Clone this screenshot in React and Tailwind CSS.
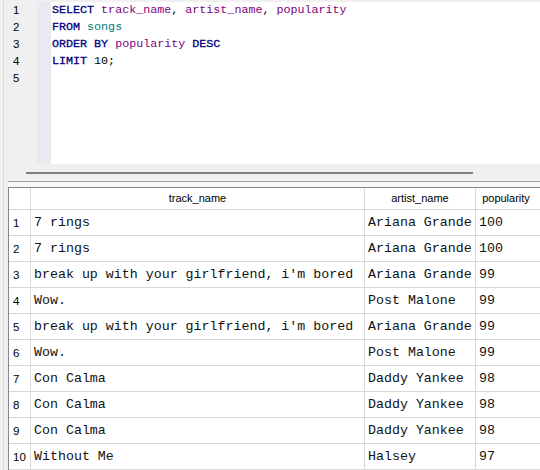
const code = [
  [['SELECT', 'kw'], [' '], ['track_name', 'id'], [', '], ['artist_name', 'id'], [', '], ['popularity', 'id']],
  [['FROM', 'kw'], [' '], ['songs', 'tb']],
  [['ORDER BY', 'kw'], [' '], ['popularity', 'id'], [' '], ['DESC', 'kw']],
  [['LIMIT', 'kw'], [' 10;']],
  [],
];

const rows = [
  ['7 rings', 'Ariana Grande', '100'],
  ['7 rings', 'Ariana Grande', '100'],
  ["break up with your girlfriend, i'm bored", 'Ariana Grande', '99'],
  ['Wow.', 'Post Malone', '99'],
  ["break up with your girlfriend, i'm bored", 'Ariana Grande', '99'],
  ['Wow.', 'Post Malone', '99'],
  ['Con Calma', 'Daddy Yankee', '98'],
  ['Con Calma', 'Daddy Yankee', '98'],
  ['Con Calma', 'Daddy Yankee', '98'],
  ['Without Me', 'Halsey', '97'],
];

const tokenClass = {
  kw: 'text-[#000080] [-webkit-text-stroke:0.3px_#000080]',
  id: 'text-[#800080]',
  tb: 'text-[#008080]',
};

const mono = "font-['Liberation_Mono','Courier_New',monospace]";
const sans = "font-['Liberation_Sans',Arial,sans-serif]";

export default function App() {
  return (
    <div className="w-[540px] h-[470px] bg-[#f0f0f0] flex overflow-hidden">
      {/* левая полоска */}
      <div className="w-[8px] shrink-0 pl-[3px]">
        <div className="w-[1px] h-full bg-[#dadada]" />
      </div>

      <div className="flex-1 flex flex-col">
        {/* редактор */}
        <div className="mt-[2px] h-[162px] flex">
          <div className={`w-[29px] bg-[#f0f0f0] pl-[5px] text-[11.5px] text-black ${sans}`}>
            {code.map((_, i) => (
              <div key={i} className="h-[17px] leading-[17px]">{i + 1}</div>
            ))}
          </div>
          <div className="w-[14px] bg-[#e9e9f2]" />
          <div className={`flex-1 bg-white pl-[1px] text-[11.7px] ${mono}`}>
            {code.map((line, i) => (
              <div key={i} className="h-[17px] leading-[17px] whitespace-pre">
                {line.map(([t, k], j) => (
                  <span key={j} className={k ? tokenClass[k] : 'text-black'}>{t}</span>
                ))}
              </div>
            ))}
          </div>
        </div>

        {/* разделитель */}
        <div className="h-[17px] pt-[8px] pl-[18px]">
          <div className="w-[447px] h-[2px] bg-[#808080]" />
        </div>
        <div className="h-[1px] bg-[#a0a0a0]" />
        <div className="h-[5px] bg-[#f7f7f7]" />

        {/* таблица результатов */}
        <div className="flex-1 bg-white border-t border-l border-[#828790]">
          <div className={`flex h-[22px] border-b border-[#d9d9d9] text-[11px] text-black ${sans}`}>
            <div className="w-[22px] border-r border-[#d9d9d9]" />
            <div className="w-[334px] border-r border-[#d9d9d9] flex items-center justify-center">track_name</div>
            <div className="w-[111px] border-r border-[#d9d9d9] flex items-center justify-center">artist_name</div>
            <div className="flex-1 flex items-center justify-center pr-[4px]">popularity</div>
          </div>
          {rows.map((r, i) => (
            <div key={i} className="flex h-[26px] border-b border-[#d9d9d9]">
              <div className={`w-[22px] border-r border-[#d9d9d9] flex items-center pl-[4px] pt-[2px] text-[11.5px] text-black ${sans}`}>
                {i + 1}
              </div>
              <div className={`w-[334px] border-r border-[#d9d9d9] flex items-center pl-[3px] text-[13.3px] text-[#111] whitespace-pre ${mono}`}>
                {r[0]}
              </div>
              <div className={`w-[111px] border-r border-[#d9d9d9] flex items-center pl-[3px] text-[13.3px] text-[#111] whitespace-pre ${mono}`}>
                {r[1]}
              </div>
              <div className={`flex-1 flex items-center pl-[3px] text-[13.3px] text-[#111] ${mono}`}>
                {r[2]}
              </div>
            </div>
          ))}
        </div>
      </div>
    </div>
  );
}
